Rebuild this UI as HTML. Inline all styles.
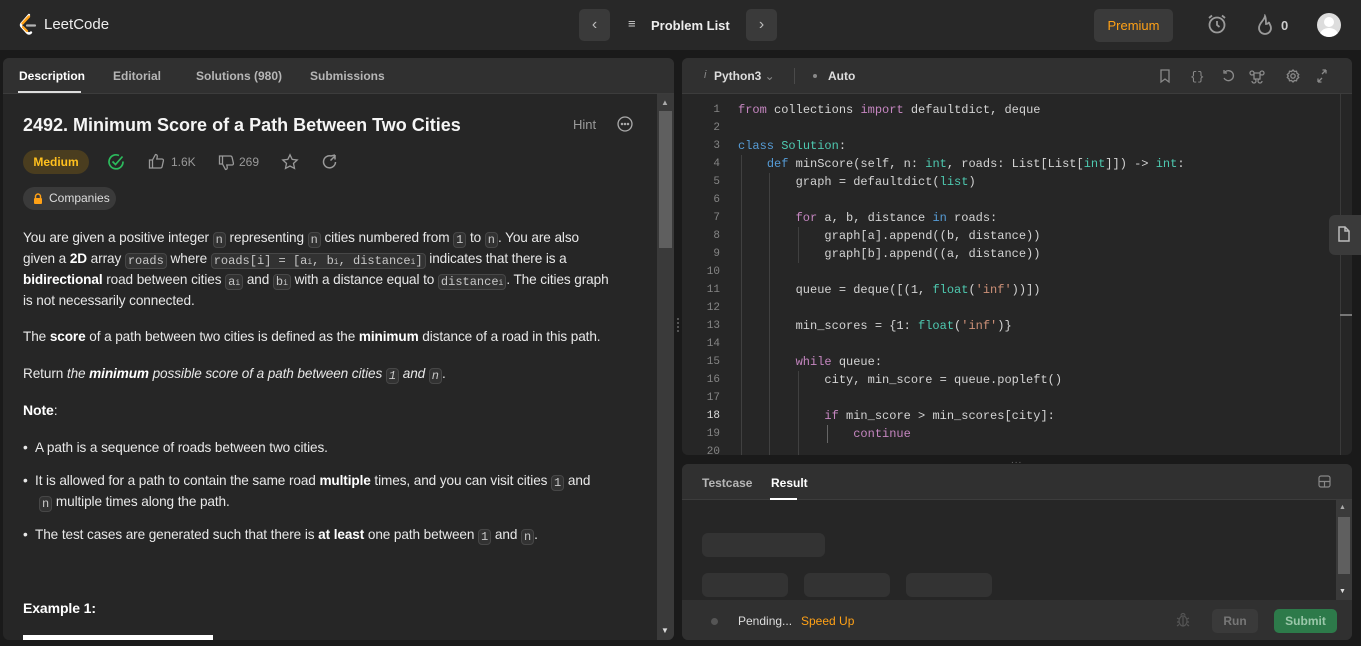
<!DOCTYPE html>
<html><head><meta charset="utf-8"><style>
*{margin:0;padding:0;box-sizing:border-box}
body{width:1361px;height:646px;background:#1a1a1a;font-family:"Liberation Sans",sans-serif;color:#eff1f6;position:relative;overflow:hidden}
.abs{position:absolute}
.hdr{left:0;top:0;width:1361px;height:50px;background:#282828}
.panel{background:#262626;border-radius:6px;overflow:hidden}
.bar{background:#303030;border-bottom:1px solid #3c3c3c}
.tab{position:absolute;font-size:12px;font-weight:bold;color:#b6b6b6;top:11px}
.desc{font-size:14px;line-height:21px;color:#e8e8e8;white-space:nowrap;letter-spacing:-0.1px}
code{font-family:"Liberation Mono",monospace;font-size:12px;line-height:14px;background:#323232;border:1px solid #474747;border-radius:4px;padding:0 2px;color:#c8c8c8;display:inline-block;vertical-align:-1px;letter-spacing:0}
sub{font-size:8px;line-height:0;vertical-align:0}
b{color:#fff}
.code{font-family:"Liberation Mono",monospace;font-size:12px;line-height:18px;color:#d4d4d4;white-space:pre}
.ln{font-family:"Liberation Mono",monospace;font-size:11px;line-height:18px;color:#858585;text-align:right;width:22px}
.k{color:#c586c0}.b{color:#569cd6}.t{color:#4ec9b0}.s{color:#ce9178}
.sk{background:#333;border-radius:6px}
</style></head><body>
<div class="abs hdr">
 <svg class="abs" style="left:18px;top:13px" width="20" height="24" viewBox="0 0 20 24"><path d="M11 2 L4 10 Q2 12 4 14 L9 19.5 Q11 21.5 13 19.5" fill="none" stroke="#fff" stroke-width="2.4" stroke-linecap="round"/><path d="M9 12.5 H17" stroke="#b3b3b3" stroke-width="2.2" stroke-linecap="round"/><path d="M4.5 10.5 L11 3.5" stroke="#ffa116" stroke-width="2.4" stroke-linecap="round"/><path d="M5 14 L9 18" stroke="#ffa116" stroke-width="2.2" stroke-linecap="round"/></svg>
 <div class="abs" style="left:44px;top:16px;font-size:15px;color:#eee">LeetCode</div>
 <div class="abs" style="left:579px;top:9px;width:31px;height:32px;background:#3a3a3a;border-radius:5px;color:#bbb;font-size:16px;text-align:center;line-height:31px">&#8249;</div>
 <div class="abs" style="left:628px;top:16px;font-size:13px;color:#ccc">&#8801;</div>
 <div class="abs" style="left:651px;top:18px;font-size:13px;font-weight:bold;color:#eee">Problem List</div>
 <div class="abs" style="left:746px;top:9px;width:31px;height:32px;background:#3a3a3a;border-radius:5px;color:#bbb;font-size:16px;text-align:center;line-height:31px">&#8250;</div>
 <div class="abs" style="left:1094px;top:9px;width:79px;height:33px;background:#3a3a3a;border-radius:5px;color:#ffa116;font-size:13px;text-align:center;line-height:33px">Premium</div>
 <svg class="abs" style="left:1206px;top:13px" width="22" height="22" viewBox="0 0 22 22" fill="none" stroke="#9a9a9a" stroke-width="1.8"><circle cx="11" cy="12" r="7.5"/><path d="M11 8v4l2.5 2M3 5l3-2.5M19 5l-3-2.5"/></svg>
 <svg class="abs" style="left:1256px;top:14px" width="18" height="22" viewBox="0 0 18 22" fill="none" stroke="#9a9a9a" stroke-width="1.8"><path d="M9 2C8 7 3 9 3 14a6 6 0 0 0 12 0c0-3-2-4-2-6-1 2-2 2-3 2 0-3 0-6-1-8z"/></svg>
 <div class="abs" style="left:1281px;top:18px;font-size:13px;font-weight:bold;color:#ccc">0</div>
 <div class="abs" style="left:1317px;top:13px;width:24px;height:24px;border-radius:50%;background:#ddd;overflow:hidden"><div class="abs" style="left:7px;top:4px;width:10px;height:10px;border-radius:50%;background:#fff"></div><div class="abs" style="left:3px;top:15px;width:18px;height:14px;border-radius:50%;background:#fff"></div></div>
</div>

<!-- left panel -->
<div class="abs panel" style="left:3px;top:58px;width:671px;height:582px">
 <div class="abs bar" style="left:0;top:0;width:671px;height:36px">
  <div class="tab" style="left:16px;color:#fff">Description</div>
  <div class="abs" style="left:15px;top:33px;width:63px;height:2px;background:#ddd"></div>
  <div class="tab" style="left:110px">Editorial</div>
  <div class="tab" style="left:193px">Solutions (980)</div>
  <div class="tab" style="left:307px">Submissions</div>
 </div>
 <div class="abs" style="left:654px;top:36px;width:17px;height:546px;background:#3a3a3a"></div>
 <div class="abs" style="left:656px;top:53px;width:13px;height:137px;background:#5f5f5f"></div>
 <div class="abs" style="left:658px;top:40px;font-size:8px;color:#aaa">&#9650;</div>
 <div class="abs" style="left:658px;top:568px;font-size:8px;color:#ddd">&#9660;</div>
</div>
<div class="abs" style="left:23px;top:115px;font-size:18px;font-weight:bold;color:#f5f5f5">2492. Minimum Score of a Path Between Two Cities</div>
<div class="abs" style="left:573px;top:117px;font-size:13px;color:#9a9a9a">Hint</div>
<svg class="abs" style="left:617px;top:116px" width="16" height="16" viewBox="0 0 16 16" fill="none" stroke="#aaa" stroke-width="1.3"><circle cx="8" cy="8" r="7"/><circle cx="5" cy="8" r=".6" fill="#aaa"/><circle cx="8" cy="8" r=".6" fill="#aaa"/><circle cx="11" cy="8" r=".6" fill="#aaa"/></svg>
<div class="abs" style="left:23px;top:150px;width:66px;height:24px;border-radius:12px;background:#4a3d1f;color:#ffc01e;font-size:12px;font-weight:bold;text-align:center;line-height:24px">Medium</div>
<svg class="abs" style="left:107px;top:153px" width="18" height="18" viewBox="0 0 18 18" fill="none" stroke="#2cbb5d" stroke-width="1.7"><path d="M16 8.5A7 7 0 1 1 12 2.5"/><path d="M5.5 8.5l3 3 7-8"/></svg>
<svg class="abs" style="left:148px;top:153px" width="17" height="17" viewBox="0 0 17 17" fill="none" stroke="#9a9a9a" stroke-width="1.3"><path d="M1.5 7h3v8h-3zM4.5 7l3-5.5c1.5 0 2 1 1.7 2.5L8.8 6H14c1 0 1.6.8 1.4 1.8l-1.3 5.8c-.2.8-.8 1.4-1.6 1.4H4.5"/></svg>
<div class="abs" style="left:171px;top:155px;font-size:12px;color:#9a9a9a">1.6K</div>
<svg class="abs" style="left:218px;top:154px" width="17" height="17" viewBox="0 0 17 17" fill="none" stroke="#9a9a9a" stroke-width="1.3"><path d="M1.5 10h3V2h-3zM4.5 10l3 5.5c1.5 0 2-1 1.7-2.5L8.8 11H14c1 0 1.6-.8 1.4-1.8L14.1 3.4C13.9 2.6 13.3 2 12.5 2H4.5"/></svg>
<div class="abs" style="left:239px;top:155px;font-size:12px;color:#9a9a9a">269</div>
<svg class="abs" style="left:281px;top:153px" width="18" height="18" viewBox="0 0 18 18" fill="none" stroke="#9a9a9a" stroke-width="1.3"><path d="M9 1.8l2.2 4.6 5 .6-3.7 3.4 1 5L9 13l-4.5 2.4 1-5L1.8 7l5-.6z"/></svg>
<svg class="abs" style="left:321px;top:153px" width="17" height="17" viewBox="0 0 17 17" fill="none" stroke="#9a9a9a" stroke-width="1.5"><path d="M14.5 9A6 6 0 1 1 10 3"/><path d="M10 3l4-1M14 2v4.5M9.5 7.5L14 3"/></svg>
<div class="abs" style="left:23px;top:187px;width:93px;height:23px;border-radius:12px;background:#3a3a3a;font-size:12px;color:#ddd;line-height:23px;padding-left:26px">Companies</div>
<svg class="abs" style="left:33px;top:193px" width="10" height="11" viewBox="0 0 10 11"><path d="M2.5 5V3.5a2.5 2.5 0 0 1 5 0V5" fill="none" stroke="#ffa116" stroke-width="1.4"/><rect x="1" y="5" width="8" height="6" rx="1" fill="#ffa116"/></svg>

<div class="abs desc" style="left:23px;top:227px;font-size:13.6px">You are given a positive integer <code>n</code> representing <code>n</code> cities numbered from <code>1</code> to <code>n</code>. You are also</div>
<div class="abs desc" style="left:23px;top:248px;font-size:13.6px">given a <b>2D</b> array <code>roads</code> where <code>roads[i] = [a<sub>i</sub>, b<sub>i</sub>, distance<sub>i</sub>]</code> indicates that there is a</div>
<div class="abs desc" style="left:23px;top:269px;font-size:13.6px"><b>bidirectional</b> road between cities <code>a<sub>i</sub></code> and <code>b<sub>i</sub></code> with a distance equal to <code>distance<sub>i</sub></code>. The cities graph</div>
<div class="abs desc" style="left:23px;top:290px;font-size:13.6px">is not necessarily connected.</div>
<div class="abs desc" style="left:23px;top:326px;font-size:13.6px">The <b>score</b> of a path between two cities is defined as the <b>minimum</b> distance of a road in this path.</div>
<div class="abs desc" style="left:23px;top:363px;font-size:13.6px">Return <i>the <b>minimum</b> possible score of a path between cities <code>1</code> and <code>n</code></i>.</div>
<div class="abs desc" style="left:23px;top:400px"><b>Note</b>:</div>
<div class="abs desc" style="left:23px;top:437px;font-size:13.6px">&#8226;&nbsp;&nbsp;A path is a sequence of roads between two cities.</div>
<div class="abs desc" style="left:23px;top:470px;font-size:13.6px">&#8226;&nbsp;&nbsp;It is allowed for a path to contain the same road <b>multiple</b> times, and you can visit cities <code>1</code> and</div>
<div class="abs desc" style="left:39px;top:491px;font-size:13.6px"><code>n</code> multiple times along the path.</div>
<div class="abs desc" style="left:23px;top:524px;font-size:13.6px">&#8226;&nbsp;&nbsp;The test cases are generated such that there is <b>at least</b> one path between <code>1</code> and <code>n</code>.</div>
<div class="abs desc" style="left:23px;top:598px"><b>Example 1:</b></div>
<div class="abs" style="left:23px;top:635px;width:190px;height:5px;background:#fff"></div>
<div class="abs" style="left:677px;top:318px;width:3px;height:14px;border-left:2px dotted #555"></div>

<!-- code panel -->
<div class="abs panel" style="left:682px;top:58px;width:670px;height:397px">
 <div class="abs bar" style="left:0;top:0;width:670px;height:36px">
  <div class="abs" style="left:22px;top:11px;font-size:11px;font-style:italic;color:#888">i</div>
  <div class="abs" style="left:32px;top:11px;font-size:12px;font-weight:bold;color:#ddd">Python3 <span style="color:#888;font-weight:normal">&#8964;</span></div>
  <div class="abs" style="left:112px;top:10px;width:1px;height:16px;background:#4a4a4a"></div>
  <div class="abs" style="left:131px;top:16px;width:4px;height:4px;border-radius:2px;background:#888"></div>
  <div class="abs" style="left:146px;top:11px;font-size:12px;font-weight:bold;color:#ddd">Auto</div>
  <svg class="abs" style="left:476px;top:10px" width="170" height="16" viewBox="0 0 170 16" fill="none" stroke="#8a8a8a" stroke-width="1.3">
   <path d="M3 2h8v12l-4-3-4 3z"/>
   <text x="32" y="12" font-size="12" fill="#8a8a8a" stroke="none" font-family="Liberation Mono">{}</text>
   <path d="M67 4a5 5 0 1 1-1 6M66 2v3h3"/>
   <path d="M96 5h6v6h-6zM96 5a2 2 0 1 1-2-2 2 2 0 0 1 2 2v6a2 2 0 1 1-2 2M102 5a2 2 0 1 0 2-2 2 2 0 0 0-2 2v6a2 2 0 1 0 2 2"/>
   <circle cx="135" cy="8" r="2.2"/><path d="M135 2l1.5 1.5 2-.3.5 2 1.7 1.3-1 1.5 1 1.5-1.7 1.3-.5 2-2-.3L135 14l-1.5-1.5-2 .3-.5-2-1.7-1.3 1-1.5-1-1.5 1.7-1.3.5-2 2 .3z"/>
   <path d="M160 14l4-4M160 14v-3.5M160 14h3.5M168 2l-4 4M168 2v3.5M168 2h-3.5"/>
  </svg>
 </div>
 <div class="abs" style="left:658px;top:36px;width:1px;height:361px;background:#3a3a3a"></div>
 <div class="abs" style="left:658px;top:256px;width:12px;height:2px;background:#777"></div>
 <div class="abs ln" style="left:16px;top:43px">1<br>2<br>3<br>4<br>5<br>6<br>7<br>8<br>9<br>10<br>11<br>12<br>13<br>14<br>15<br>16<br>17<br><span style="color:#ddd">18</span><br>19<br>20</div>
 <div class="abs" style="left:87px;top:115px;width:1px;height:282px;background:#404040"></div>
 <div class="abs" style="left:59px;top:97px;width:1px;height:300px;background:#404040"></div>
 <div class="abs" style="left:116px;top:169px;width:1px;height:36px;background:#404040"></div>
 <div class="abs" style="left:116px;top:313px;width:1px;height:84px;background:#404040"></div>
 <div class="abs" style="left:145px;top:367px;width:1px;height:18px;background:#666"></div>
 <div class="abs code" style="left:56px;top:43px"><span class="k">from</span> collections <span class="k">import</span> defaultdict, deque

<span class="b">class</span> <span class="t">Solution</span>:
    <span class="b">def</span> minScore(self, n: <span class="t">int</span>, roads: List[List[<span class="t">int</span>]]) -> <span class="t">int</span>:
        graph = defaultdict(<span class="t">list</span>)

        <span class="k">for</span> a, b, distance <span class="b">in</span> roads:
            graph[a].append((b, distance))
            graph[b].append((a, distance))

        queue = deque([(1, <span class="t">float</span>(<span class="s">'inf'</span>))])

        min_scores = {1: <span class="t">float</span>(<span class="s">'inf'</span>)}

        <span class="k">while</span> queue:
            city, min_score = queue.popleft()

            <span class="k">if</span> min_score > min_scores[city]:
                <span class="k">continue</span></div>
</div>
<div class="abs" style="left:1329px;top:215px;width:32px;height:40px;background:#3a3a3a;border-radius:6px 0 0 6px"></div>
<svg class="abs" style="left:1337px;top:226px" width="14" height="16" viewBox="0 0 14 16" fill="none" stroke="#bbb" stroke-width="1.5"><path d="M2 1h6l4 4v10H2zM8 1v4h4"/></svg>
<div class="abs" style="left:1011px;top:455px;font-size:10px;color:#666;letter-spacing:1px">...</div>

<!-- result panel -->
<div class="abs panel" style="left:682px;top:464px;width:670px;height:176px">
 <div class="abs bar" style="left:0;top:0;width:670px;height:36px;background:#303030">
  <div class="tab" style="left:20px;top:12px">Testcase</div>
  <div class="tab" style="left:89px;top:12px;color:#fff">Result</div>
  <div class="abs" style="left:88px;top:34px;width:27px;height:2px;background:#fff"></div>
  <svg class="abs" style="left:636px;top:11px" width="13" height="13" viewBox="0 0 13 13" fill="none" stroke="#888" stroke-width="1.2"><rect x="1" y="1" width="11" height="11" rx="2"/><path d="M1 6.5h11M6.5 6.5V12"/></svg>
 </div>
 <div class="abs" style="left:654px;top:36px;width:16px;height:100px;background:#3a3a3a"></div>
 <div class="abs" style="left:656px;top:53px;width:12px;height:57px;background:#5f5f5f"></div>
 <div class="abs" style="left:657px;top:40px;font-size:7px;color:#aaa">&#9650;</div>
 <div class="abs" style="left:657px;top:124px;font-size:7px;color:#ddd">&#9660;</div>
 <div class="abs sk" style="left:20px;top:69px;width:123px;height:24px"></div>
 <div class="abs sk" style="left:20px;top:109px;width:86px;height:24px"></div>
 <div class="abs sk" style="left:122px;top:109px;width:86px;height:24px"></div>
 <div class="abs sk" style="left:224px;top:109px;width:86px;height:24px"></div>
 <div class="abs" style="left:0;top:136px;width:670px;height:40px;background:#303030"></div>
 <div class="abs" style="left:29px;top:154px;width:7px;height:7px;border-radius:50%;background:#555"></div>
 <div class="abs" style="left:56px;top:150px;font-size:12px;color:#ddd">Pending...</div>
 <div class="abs" style="left:119px;top:150px;font-size:12px;color:#ffa116">Speed Up</div>
 <svg class="abs" style="left:494px;top:148px" width="14" height="16" viewBox="0 0 14 16" fill="none" stroke="#555" stroke-width="1.2"><ellipse cx="7" cy="9" rx="4" ry="5"/><path d="M5 3.5a2 2 0 0 1 4 0M1 6l2 1M13 6l-2 1M1 10h2M13 10h-2M1 14l2-1.5M13 14l-2-1.5M7 5v9"/></svg>
 <div class="abs" style="left:530px;top:145px;width:46px;height:24px;background:#3a3a3a;border-radius:5px;color:#777;font-size:12px;font-weight:bold;text-align:center;line-height:24px">Run</div>
 <div class="abs" style="left:592px;top:145px;width:63px;height:24px;background:#2d7a4a;border-radius:5px;color:#9ac7a9;font-size:12px;font-weight:bold;text-align:center;line-height:24px">Submit</div>
</div>
</body></html>
